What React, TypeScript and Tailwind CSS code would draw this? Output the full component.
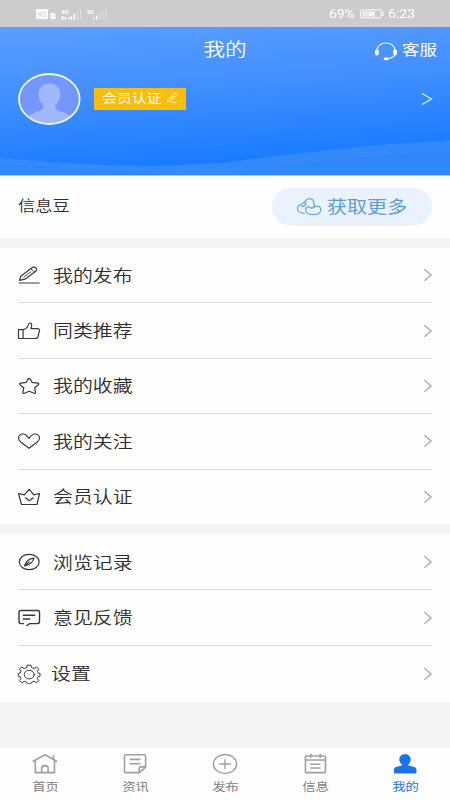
import clsx from "clsx";
import { ReactNode } from "react";

interface IMenuItem {
  label: string;
  icon: ReactNode;
}

interface ITabItem extends IMenuItem {
  active?: boolean;
}

const iconProps = {
  width: 24,
  height: 20,
  viewBox: "0 0 24 20",
  fill: "none",
  stroke: "currentColor",
  strokeWidth: 1.2,
  strokeLinecap: "round",
  strokeLinejoin: "round",
} as const;

const tabIconProps = {
  width: 28,
  height: 24,
  viewBox: "0 0 28 24",
  fill: "none",
  stroke: "currentColor",
  strokeWidth: 1.6,
  strokeLinecap: "round",
  strokeLinejoin: "round",
} as const;

const mainMenu: IMenuItem[] = [
  {
    label: "我的发布",
    icon: (
      <svg {...iconProps}>
        <path d="M2.2 18h20" />
        <path d="M2.5 15.4l1.3-4.2L14.6 3.1c1.4-1 3-1.100 4.200-.2 1.300 1 1.200 2.400-.1 3.400L8 14.200z" />
        <path d="M13.800 4l3.900 3M6.800 12l7-5.200" strokeWidth={0.9} />
      </svg>
    ),
  },
  {
    label: "同类推荐",
    icon: (
      <svg {...iconProps}>
        <path d="M1.500 8.600h4.600v8.900H1.500zM6.100 8.600c3.300-.7 4.600-2.500 5.300-5 .3-1.500 1.400-1.800 2.400-1.300 1.400.8.9 3.200.2 5.300h6.400c1.600 0 2.400.7 2.100 1.800l-1.600 6.600c-.3 1.100-1 1.500-2.300 1.500H6.100" />
      </svg>
    ),
  },
  {
    label: "我的收藏",
    icon: (
      <svg {...iconProps}>
        <path d="M12.200 2.300c.5 0 .7.300 1 .8l1.800 3.200 5.700.9c1.200.2 1.400.9.600 1.600L17.600 12l.9 4.200c.2 1.100-.5 1.500-1.500 1l-4.800-2-4.800 2c-1 .5-1.700.1-1.500-1l.9-4.200-3.700-3.200c-.8-.7-.6-1.400.6-1.600l5.700-.9 1.800-3.200c.3-.5.5-.8 1-.8z" />
      </svg>
    ),
  },
  {
    label: "我的关注",
    icon: (
      <svg {...iconProps}>
        <path d="M10.200 5.800l2 1.500c1.500-2.400 3.300-4.300 5.700-4.300 2.700 0 4.600 1.800 4.600 4 0 1.800-1 3-2.500 4.300L12 17.300l-8-6C2.500 10 1.500 8.800 1.500 7c0-2.200 1.900-4 4.600-4 1.800 0 3.100 1 4.100 2.200" />
      </svg>
    ),
  },
  {
    label: "会员认证",
    icon: (
      <svg {...iconProps}>
        <path d="M12.200 2.300l4.700 5.600 5.600-1.400-2.500 11H4.500L1.500 6.500l5.800 1.400z" />
        <path d="M8.400 10.800l3.900 2.900 3.900-2.900" />
      </svg>
    ),
  },
];

const otherMenu: IMenuItem[] = [
  {
    label: "浏览记录",
    icon: (
      <svg {...iconProps}>
        <ellipse cx="12.200" cy="10" rx="9.900" ry="7.700" />
        <path d="M17 6.200c-1 3.800-3.400 6.700-9.500 7.600 1.100-4 3.500-6.900 9.500-7.600zM7.700 13.600l4.500-3.600" />
      </svg>
    ),
  },
  {
    label: "意见反馈",
    icon: (
      <svg {...iconProps} strokeWidth={1.4}>
        <path d="M6.600 15.600H4.200c-1.400 0-2.200-.7-2.200-1.800V4.300c0-1.100.8-1.800 2.200-1.800h16.100c1.400 0 2.200.7 2.200 1.800v9.500c0 1.100-.8 1.800-2.200 1.800h-7.600l-2.900 1.900" />
        <path d="M6.300 7.300h11.500M6.300 11h6.500" />
      </svg>
    ),
  },
  {
    label: "设置",
    icon: (
      <svg {...iconProps} strokeWidth={1}>
        <path d="M10.300 1.200h3.700l.6 2.400 2.400.9 2.600-1.400 2.300 2-1.600 2.200 1 1.800 1.700.2v2.900l-1.900.5-.9 1.800 1.700 2-2.500 2.200-2.500-1.400-2.300.9-.7 1.600h-3.500l-.7-1.600-2.300-.9-2.500 1.400-2.500-2.200 1.700-2-.9-1.800-1.900-.5V9.300l1.800-.2.900-1.800-1.600-2.200 2.400-2 2.500 1.400 2.400-.9z" />
        <ellipse cx="12.200" cy="10.600" rx="5" ry="4.300" />
      </svg>
    ),
  },
];

const tabs: ITabItem[] = [
  {
    label: "首页",
    icon: (
      <svg {...tabIconProps}>
        <path d="M2.200 9.300L14 2.700l11.600 6.600M22.500 3.800v3.500M4.300 9v11.600h19.200V9" />
        <path d="M10.700 20.400v-4.300c0-1.600 1.200-2.500 3.200-2.500s3.200.9 3.200 2.500v4.300" />
      </svg>
    ),
  },
  {
    label: "资讯",
    icon: (
      <svg {...tabIconProps}>
        <path d="M4.800 2.800h18.500c.9 0 1.300.4 1.300 1.200v11.400l-6.200 5.200H4.800c-.9 0-1.300-.4-1.300-1.200V4c0-.8.400-1.200 1.300-1.200zM24.400 14.900h-5c-.8 0-1.200.3-1.200 1v4.500M9.300 7.400h9.500M9.300 11.800h9.500" />
      </svg>
    ),
  },
  {
    label: "发布",
    icon: (
      <svg {...tabIconProps} strokeWidth={1.4}>
        <ellipse cx="14" cy="12" rx="11.600" ry="9.500" />
        <path d="M8.600 12h10.800M14 7.500v9" />
      </svg>
    ),
  },
  {
    label: "信息",
    icon: (
      <svg {...tabIconProps}>
        <path d="M5.300 4h18.300c.6 0 .9.300.9.800v15c0 .5-.3.800-.9.800H5.300c-.6 0-.9-.3-.9-.8v-15c0-.5.3-.8.9-.8zM4.400 8h20M9.800 2.200v3.300M19.200 2.200v3.300M10 12.300h8.800M10 16h8.800" />
      </svg>
    ),
  },
  {
    label: "我的",
    active: true,
    icon: (
      <svg {...tabIconProps} fill="currentColor" stroke="none">
        <path d="M14 2.200c3.500 0 5.700 2.100 5.700 5.100 0 2-.8 3.700-2.100 4.800-.7.700-.4 1.400.6 1.700l4.400 1c1.900.5 2.900 1.500 2.900 3.400v1.900c0 .9-.5 1.300-1.500 1.300H4.300c-1 0-1.500-.4-1.500-1.300v-1.900c0-1.900 1-2.900 2.900-3.400l4.300-1c1-.3 1.200-1 .5-1.700C9.200 11 8.300 9.300 8.300 7.300c0-3 2.200-5.100 5.700-5.100z" />
      </svg>
    ),
  },
];

function StatusBar() {
  return (
    <div className="flex h-[27px] items-center justify-between bg-[#cdcbcc] px-[36px] text-white">
      <svg width="72" height="14" viewBox="0 0 72 14" fill="currentColor">
        <rect x="0" y="2" width="12" height="10" rx="1" />
        <path
          d="M2.500 5v4.500M4.700 5v4.500M2.500 7.200h2.200M7 5v4.500h1.200q1.300 0 1.300-1.200V6.200Q9.500 5 8.200 5z"
          fill="none"
          stroke="#cdcbcc"
          strokeWidth="0.800"
        />
        <path d="M14.300 6h3.500l1.800 1.700V12h-5.300z" />
        <path d="M16 8.200h2M16 10h2" stroke="#cdcbcc" strokeWidth="0.600" />
        <text x="25" y="6.500" fontSize="6" fontFamily="Roboto" fontWeight="700">
          4G
        </text>
        <path d="M25.500 9h2v3.500h-2zM28.500 10h2v2.500h-2zM32 10.500h1.500v2H32zM34.500 9H36v3.500h-1.500zM37.500 6.500H39v6h-1.500z" />
        <path d="M41 4h1v8.500h-1zM44 2h1v10.500h-1z" opacity="0.450" />
        <text x="50.500" y="6.500" fontSize="6" fontFamily="Roboto" fontWeight="700">
          3G
        </text>
        <path d="M57 10.500h1.500v2H57zM60 8.500h1.500v4H60z" />
        <path d="M63.500 6h1v6.500h-1zM66.500 4h1v8.500h-1zM69.500 2h1v10.500h-1z" opacity="0.450" />
      </svg>
      <div className="flex items-center font-[Roboto,sans-serif] text-[12px] leading-none font-normal">
        <span className="w-[30px] origin-left scale-x-[1.150]">69%</span>
        <svg width="28" height="12" viewBox="0 0 28 12" fill="none" className="mr-px">
          <rect x="1.500" y="1.800" width="20.500" height="8" rx="0.800" stroke="white" />
          <rect x="3" y="3.200" width="13" height="5.200" fill="white" opacity="0.600" />
          <path d="M9 8.700l2.500-3.700 3.500-1.500-2 4z" fill="white" />
          <path d="M23.800 3.700v4.200" stroke="white" strokeWidth="1.300" />
        </svg>
        <span className="w-[26px] origin-left scale-x-[1.170]">6:23</span>
      </div>
    </div>
  );
}

function Header() {
  return (
    <header className="relative h-[149px] border-b border-[#9fd2fd] bg-[linear-gradient(176deg,#5a9eff_0%,#438fff_40%,#167bff_86%,#167bff_100%)] text-white">
      <svg
        className="absolute bottom-0 left-0"
        width="450"
        height="38"
        viewBox="0 0 450 38"
      >
        <path
          d="M0 20.500C50 26 100 28.500 150 28.500C180 28.500 200 27 225 25.500C290 17 370 7 450 3.500V38H0z"
          fill="#3489fb"
        />
        <path d="M225 38C300 25 380 18 450 14V38z" fill="#2c84fa" opacity="0.350" />
        <path d="M0 27C60 30 120 37 225 38H0z" fill="#2880f8" opacity="0.300" />
      </svg>
      <div className="relative grid h-[45px] grid-cols-3 items-center">
        <h1 className="col-start-2 scale-x-[1.200] pb-[3px] text-center text-[18px] leading-none">
          我的
        </h1>
        <div className="flex items-center pt-0.5 pl-[74px]">
          <svg width="24" height="20" viewBox="0 0 24 20" fill="none" className="shrink-0">
            <path
              d="M3 10C3 5 7 2 12 2s9 3 9 8v2.500c0 2.500-3 4.500-7.500 5.300"
              stroke="white"
              strokeWidth="1.200"
            />
            <rect x="1" y="8.500" width="3.800" height="6" rx="1.700" fill="white" />
            <rect x="19.200" y="8.500" width="3.800" height="6" rx="1.700" fill="white" />
            <ellipse cx="12.200" cy="17.800" rx="2.600" ry="1.500" fill="white" />
          </svg>
          <span className="ml-1 origin-left scale-x-[1.200] pb-0.5 text-[14.500px] leading-none font-normal whitespace-nowrap">
            客服
          </span>
        </div>
      </div>
      <div className="relative flex h-[53px] items-center pr-[17px] pl-[18px]">
        <svg width="63" height="52" viewBox="0 0 63 52">
          <defs>
            <clipPath id="avatar">
              <ellipse cx="31.300" cy="26" rx="30" ry="24.700" />
            </clipPath>
          </defs>
          <ellipse cx="31.300" cy="26" rx="30.300" ry="25" fill="#7397ff" />
          <path
            clipPath="url(#avatar)"
            d="M31.300 10.500c6.700 0 11 4.500 11 10.500 0 5-2 8.500-5 11v3c1 2.500 6 3 10 5l7 4v10H8V44l8-4c4-2 8-2.500 9.500-5v-3c-3-2.500-5-6-5-11 0-6 4.300-10.500 10.800-10.500z"
            fill="#a1b9fc"
          />
          <ellipse
            cx="31.300"
            cy="26"
            rx="30.300"
            ry="25"
            fill="none"
            stroke="#eefaff"
            strokeWidth="1.800"
          />
        </svg>
        <div className="ml-[13px] flex h-[22px] w-[92px] items-center bg-[#fabd09] pl-2">
          <span className="w-[64px] origin-left scale-x-[1.190] text-[12.500px] leading-none font-normal whitespace-nowrap">
            会员认证
          </span>
          <svg
            width="13"
            height="12"
            viewBox="0 0 13 12"
            fill="none"
            stroke="white"
            strokeWidth="0.900"
            strokeLinejoin="round"
            className="mb-0.5"
          >
            <path d="M1.500 9.800l.9-2.900 5.500-5.200c.7-.6 1.500-.6 2.200-.1.800.6.8 1.200.1 1.900L4.500 9zM5.800 10.300h4.800M4 7.800l3.800-3.500" />
          </svg>
        </div>
        <svg
          className="ml-auto"
          width="12"
          height="14"
          viewBox="0 0 12 14"
          fill="none"
          stroke="#e5f4ff"
          strokeWidth="1.200"
        >
          <path d="M1 1.500L10.500 7 1 12.500" />
        </svg>
      </div>
    </header>
  );
}

function MenuRow({ item, last }: { item: IMenuItem; last?: boolean }) {
  return (
    <div
      className={clsx(
        "mx-[18px] flex items-center",
        last ? "flex-1" : "h-[55.400px] border-b border-[#dcdadd]"
      )}
    >
      <span className="-ml-px shrink-0 text-[#39393b]">{item.icon}</span>
      <span
        className={clsx(
          "origin-left scale-x-[1.170] pb-0.5 text-[17px] leading-none text-[#2e2e30]",
          item.label.length > 2 ? "ml-3" : "ml-2.5"
        )}
      >
        {item.label}
      </span>
      <svg
        className="ml-auto"
        width="9"
        height="14"
        viewBox="0 0 9 14"
        fill="none"
        stroke="#b2b2b4"
        strokeWidth="1.500"
      >
        <path d="M1.300 1.200L8 7l-6.700 5.800" />
      </svg>
    </div>
  );
}

function TabBar() {
  return (
    <nav className="mt-auto grid h-[52px] grid-cols-5 bg-[#fefdff]">
      {tabs.map((tab) => (
        <div
          key={tab.label}
          className={clsx(
            "flex flex-col items-center pt-1",
            tab.active ? "text-[#1b74ea]" : "text-[#a0a0a2]"
          )}
        >
          {tab.icon}
          <span
            className={clsx(
              "mt-[5px] scale-x-[1.160] text-[11.500px] leading-none font-normal",
              !tab.active && "text-[#818183]"
            )}
          >
            {tab.label}
          </span>
        </div>
      ))}
    </nav>
  );
}

function App() {
  return (
    <div className="flex h-[800px] w-[450px] flex-col overflow-hidden bg-[#f4f3f6] font-['Noto_Sans_CJK_SC',sans-serif] font-[350]">
      <StatusBar />
      <Header />
      <section className="flex h-[62px] items-center justify-between bg-[#fefefe] px-[18px]">
        <span className="origin-left scale-x-[1.190] pb-[3px] text-[14.500px] leading-none text-[#2e2e30]">
          信息豆
        </span>
        <button className="flex h-[38px] w-[160px] items-center rounded-full bg-[#eaf2fe] pl-6 text-[#5a9dd8]">
          <svg
            width="26"
            height="20"
            viewBox="0 0 26 20"
            fill="none"
            stroke="currentColor"
            strokeWidth="1.100"
            strokeLinecap="round"
          >
            <path d="M9.700 7.200C8.700 6.500 8.800 5.500 9.300 4.400 10 2.700 11.500 1.700 13.700 1.700c2.400 0 3.700 1.200 3.900 3.200.2 1.500.9 2.300.9 4.400" />
            <path d="M9.300 4.400L5.200 7.200C3 8 1.500 9.300 1.500 11.700c0 2.700 3.100 4.500 6.800 4.500M9.700 7.200c-.5 1.500-2 2.200-4 2.200" />
            <path d="M12 9.700c1.200 0 1.800 1.400 3.500 1.400 2.200 0 2.900-1.800 5.400-1.800 2.300 0 3.900 1.500 3.900 3.600 0 2.900-3.300 4.900-7.500 4.900-4 0-7.600-1.600-7.600-4.700 0-1.900 1-3.400 2.300-3.400z" />
          </svg>
          <span className="ml-[5px] origin-left scale-x-[1.180] pb-[3px] text-[17px] leading-none font-normal">
            获取更多
          </span>
        </button>
      </section>
      <section className="mt-2.5 flex h-[276px] flex-col bg-[#fefefe]">
        {mainMenu.map((item, index) => (
          <MenuRow key={item.label} item={item} last={index === mainMenu.length - 1} />
        ))}
      </section>
      <section className="mt-2.5 flex h-[168px] flex-col bg-[#fefefe] pt-px">
        {otherMenu.map((item, index) => (
          <MenuRow key={item.label} item={item} last={index === otherMenu.length - 1} />
        ))}
      </section>
      <TabBar />
    </div>
  );
}

export default App;
